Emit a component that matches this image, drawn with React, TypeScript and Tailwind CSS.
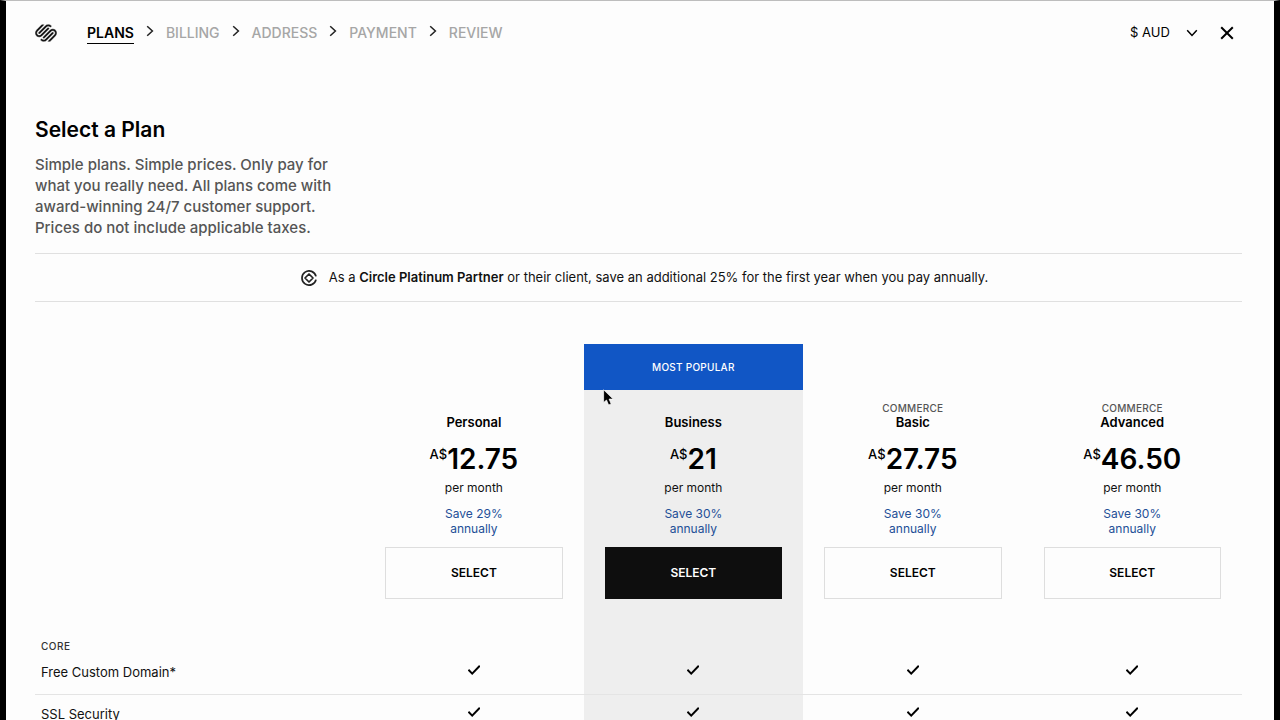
import { Fragment, useState } from 'react'
import clsx from 'clsx'
import { SiSquarespace } from 'react-icons/si'

interface Plan {
  id: string
  name: string
  family?: string
  price: string
  saving: string
  popular?: boolean
}

const STEPS = ['Plans', 'Billing', 'Address', 'Payment', 'Review']

const CURRENCIES = ['AUD', 'USD', 'EUR', 'GBP']

const PLANS: Plan[] = [
  { id: 'personal', name: 'Personal', price: '12.75', saving: 'Save 29%' },
  { id: 'business', name: 'Business', price: '21', saving: 'Save 30%', popular: true },
  { id: 'basic', name: 'Basic', family: 'Commerce', price: '27.75', saving: 'Save 30%' },
  { id: 'advanced', name: 'Advanced', family: 'Commerce', price: '46.50', saving: 'Save 30%' },
]

const CORE_FEATURES = ['Free Custom Domain*', 'SSL Security']

function Chevron({ className }: { className?: string }) {
  return (
    <svg className={className} viewBox="0 0 8 12" fill="none" stroke="currentColor" strokeWidth="1.5" aria-hidden="true">
      <path d="M1.2 1.2 6.4 6 1.2 10.8" />
    </svg>
  )
}

function CircleBadge() {
  return (
    <svg className="h-4 w-4 shrink-0" viewBox="0 0 16 16" fill="none" stroke="#222" aria-hidden="true">
      <path d="M12.4 8 14.6 5.6A7.1 7.1 0 1 0 14.6 10.4" strokeWidth="0" />
      <path d="M15 6.4A7.1 7.1 0 1 0 15 9.6" strokeWidth="1.7" />
      <path d="M8 4 12 8 8 12 4 8Z" strokeWidth="1.7" strokeLinejoin="round" />
    </svg>
  )
}

function Check() {
  return (
    <svg className="mx-auto h-3 w-3" viewBox="0 0 12 12" fill="none" stroke="#000" strokeWidth="2" role="img" aria-label="Included">
      <path d="M0.4 5.8 4.2 9.6 11.8 1.8" />
    </svg>
  )
}

function Pointer() {
  return (
    <svg className="pointer-events-none absolute top-[45px] left-[19px] h-[17px] w-[11px]" viewBox="0 0 11 17" aria-hidden="true">
      <path
        d="M0.6 0.8V13.6L3.5 11 5.6 16 8.2 14.9 6.1 10.1H10.2Z"
        fill="#000"
        stroke="#fff"
        strokeWidth="0.7"
        strokeLinejoin="round"
      />
    </svg>
  )
}

function Header() {
  const [currency, setCurrency] = useState('AUD')

  return (
    <header className="flex h-16 items-center justify-between">
      <div className="flex items-center">
        <SiSquarespace className="mr-[30px] h-[22px] w-[22px]" stroke="#fdfdfd" strokeWidth="0.4" />
        <nav aria-label="Checkout steps">
          <ol className="flex items-center text-sm font-medium uppercase">
            {STEPS.map((step, i) => (
              <Fragment key={step}>
                {i > 0 && (
                  <li className="mx-3 pb-1" aria-hidden="true">
                    <Chevron className="h-3 w-2 text-[#222]" />
                  </li>
                )}
                <li>
                  <a
                    href="#"
                    className={clsx(
                      'block border-b',
                      i === 0 ? 'border-black font-semibold text-black' : 'border-transparent text-[#a6a6a6]'
                    )}
                    aria-current={i === 0 ? 'step' : undefined}
                  >
                    {step}
                  </a>
                </li>
              </Fragment>
            ))}
          </ol>
        </nav>
      </div>

      <div className="flex items-center gap-4">
        <div className="relative flex items-center text-black">
          <select
            aria-label="Currency"
            value={currency}
            onChange={(e) => setCurrency(e.target.value)}
            className="w-[66px] appearance-none bg-transparent text-[13px] outline-none"
          >
            {CURRENCIES.map((code) => (
              <option key={code} value={code}>
                $ {code}
              </option>
            ))}
          </select>
          <Chevron className="pointer-events-none absolute right-0 h-3 w-2 rotate-90" />
        </div>
        <button type="button" aria-label="Close" className="p-2">
          <svg className="h-[14px] w-[14px]" viewBox="0 0 14 14" fill="none" stroke="#000" strokeWidth="2" aria-hidden="true">
            <path d="M1.2 1.2 12.8 12.8M12.8 1.2 1.2 12.8" />
          </svg>
        </button>
      </div>
    </header>
  )
}

function PlanHeading({ plan }: { plan: Plan }) {
  return (
    <th scope="col" className={clsx('relative p-0 align-top font-normal', plan.popular && 'bg-[#eeeeee]')}>
      <div
        className={clsx(
          'flex h-[46px] items-center justify-center text-[10px] font-medium tracking-wide uppercase',
          plan.popular && 'bg-[#1156c5] text-white'
        )}
      >
        {plan.popular && 'Most popular'}
      </div>
      {plan.popular && <Pointer />}
      <div className="px-[21px] pt-3">
        <div className="h-3 text-[10px] leading-3 font-medium tracking-wide text-[#555] uppercase">{plan.family}</div>
        <div className="text-[13px] leading-4 font-semibold text-black">{plan.name}</div>
        <div className="mt-3 flex items-start justify-center text-black">
          <span className="pt-1 text-[13px] leading-4 font-medium">A$</span>
          <span className="text-[28px] leading-[34px] font-semibold">{plan.price}</span>
        </div>
        <div className="mt-1 text-xs leading-4">per month</div>
        <div className="mt-[10px] text-xs leading-[15px] text-[#234f97]">
          {plan.saving}
          <br />
          annually
        </div>
        <button
          type="button"
          className={clsx(
            'mt-[11px] h-[52px] w-full border text-xs font-semibold uppercase',
            plan.popular ? 'border-[#0e0e0e] bg-[#0e0e0e] text-white' : 'border-[#dedede] text-black'
          )}
        >
          Select
        </button>
      </div>
    </th>
  )
}

export default function App() {
  return (
    <div className="h-screen overflow-hidden border-x-[6px] border-t border-x-black border-t-[#bdbdbd] bg-[#fdfdfd] pr-8 pl-[29px] font-['Inter','Liberation_Sans',sans-serif] text-[#111]">
      <Header />

      <main>
        <section className="mt-[53px]">
          <h1 className="text-[21px] leading-6 font-semibold text-black">Select a Plan</h1>
          <p className="mt-3 text-[15px] leading-[21px] font-medium text-[#555]">
            Simple plans. Simple prices. Only pay for
            <br />
            what you really need. All plans come with
            <br />
            award-winning 24/7 customer support.
            <br />
            Prices do not include applicable taxes.
          </p>
        </section>

        <aside className="mt-[15px] flex h-[49px] items-center justify-center gap-3 border-y border-[#e0e0e0] pl-3 text-[13px]">
          <CircleBadge />
          <p>
            As a <strong className="font-semibold">Circle Platinum Partner</strong> or their client, save an additional
            25% for the first year when you pay annually.
          </p>
        </aside>

        <table className="mt-[42px] w-full table-fixed border-collapse">
          <thead>
            <tr>
              <td className="w-3/11" />
              {PLANS.map((plan) => (
                <PlanHeading key={plan.id} plan={plan} />
              ))}
            </tr>
          </thead>
          <tbody>
            <tr>
              <th
                scope="rowgroup"
                className="h-[53px] p-0 pl-[6px] text-left align-bottom text-[10px] leading-3 font-medium tracking-wider text-[#333] uppercase"
              >
                Core
              </th>
              {PLANS.map((plan) => (
                <td key={plan.id} className={clsx(plan.popular && 'bg-[#eeeeee]')} />
              ))}
            </tr>
            {CORE_FEATURES.map((feature) => (
              <tr key={feature} className="border-b border-[#e4e4e4]">
                <th scope="row" className="h-[42px] p-0 pl-[6px] text-left text-[13px] font-normal">
                  {feature}
                </th>
                {PLANS.map((plan) => (
                  <td key={plan.id} className={clsx('p-0 pb-[6px]', plan.popular && 'bg-[#eeeeee]')}>
                    <Check />
                  </td>
                ))}
              </tr>
            ))}
          </tbody>
        </table>
      </main>
    </div>
  )
}
